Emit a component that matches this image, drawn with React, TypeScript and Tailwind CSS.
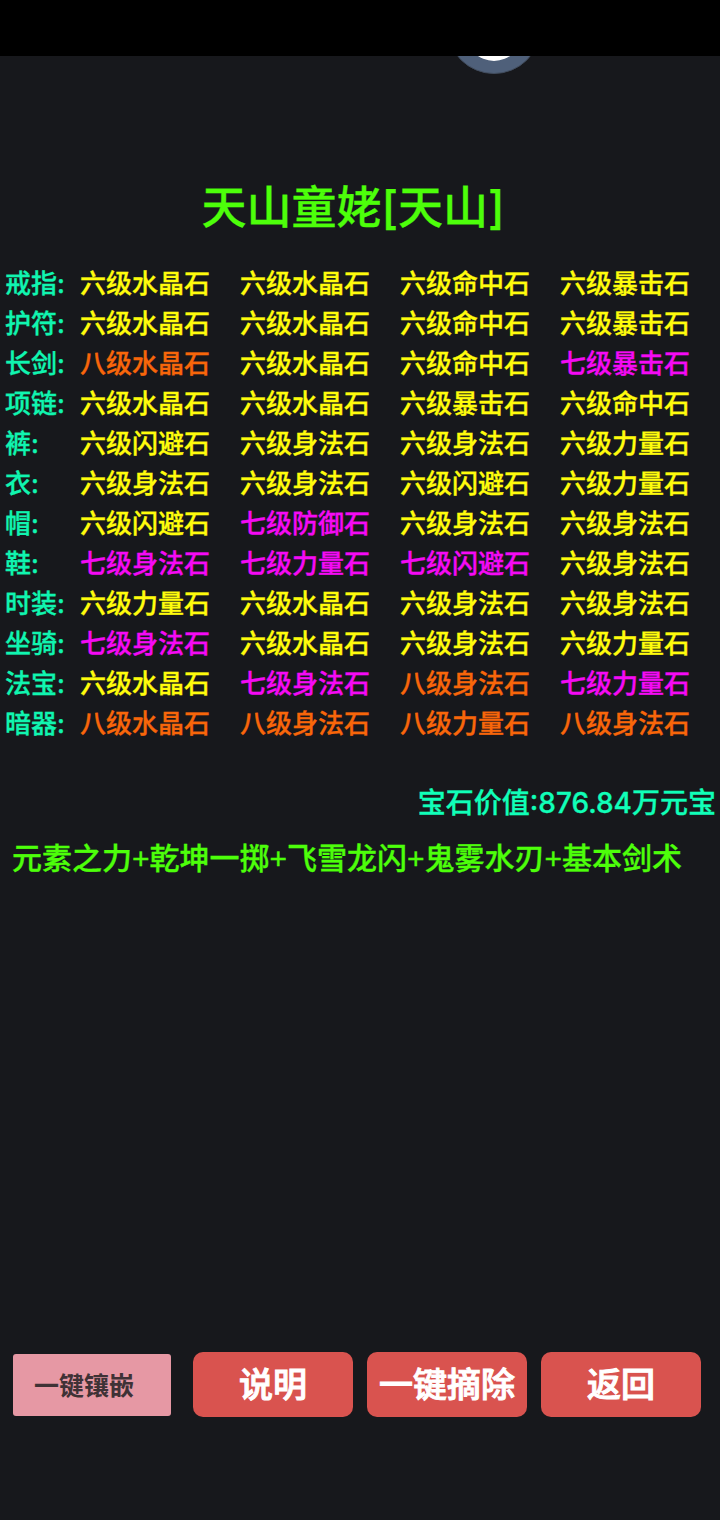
import { clsx } from 'clsx'

type Gem = string

const slots: { name: string; gems: Gem[] }[] = [
  { name: '戒指', gems: ['六级水晶石', '六级水晶石', '六级命中石', '六级暴击石'] },
  { name: '护符', gems: ['六级水晶石', '六级水晶石', '六级命中石', '六级暴击石'] },
  { name: '长剑', gems: ['八级水晶石', '六级水晶石', '六级命中石', '七级暴击石'] },
  { name: '项链', gems: ['六级水晶石', '六级水晶石', '六级暴击石', '六级命中石'] },
  { name: '裤', gems: ['六级闪避石', '六级身法石', '六级身法石', '六级力量石'] },
  { name: '衣', gems: ['六级身法石', '六级身法石', '六级闪避石', '六级力量石'] },
  { name: '帽', gems: ['六级闪避石', '七级防御石', '六级身法石', '六级身法石'] },
  { name: '鞋', gems: ['七级身法石', '七级力量石', '七级闪避石', '六级身法石'] },
  { name: '时装', gems: ['六级力量石', '六级水晶石', '六级身法石', '六级身法石'] },
  { name: '坐骑', gems: ['七级身法石', '六级水晶石', '六级身法石', '六级力量石'] },
  { name: '法宝', gems: ['六级水晶石', '七级身法石', '八级身法石', '七级力量石'] },
  { name: '暗器', gems: ['八级水晶石', '八级身法石', '八级力量石', '八级身法石'] },
]

const skills = ['元素之力', '乾坤一掷', '飞雪龙闪', '鬼雾水刃', '基本剑术']

const actions = ['说明', '一键摘除', '返回']

// gem colour follows its level
function gemColor(gem: Gem) {
  if (gem.startsWith('八')) return 'text-[#f8660a]'
  if (gem.startsWith('七')) return 'text-[#f50af5]'
  return 'text-[#fffc0c]'
}

function FloatingBall() {
  return (
    <svg className="block ml-[63%] w-20 h-5" viewBox="0 0 80 20" aria-hidden="true">
      <circle cx="40" cy="-29" r="46.5" fill="#4f607a" stroke="#414c5d" />
      <circle cx="40" cy="-23" r="28" fill="#fff" />
    </svg>
  )
}

export default function App() {
  return (
    <div className="min-h-screen flex flex-col bg-[#17181c] font-medium font-[Inter,'Noto_Sans_CJK_SC',sans-serif] [-webkit-text-stroke:0.02em]">
      {/* Status bar */}
      <div className="h-14 bg-black" />
      <FloatingBall />

      <main className="flex-1 flex flex-col">
        <h1 className="mt-[104px] pr-[14px] text-center text-[45px] leading-14 font-medium text-[#4dff0a]">
          天山童姥[天山]
        </h1>

        {/* Gem slots */}
        <table className="mt-7 w-full table-fixed text-[26px] leading-10">
          <tbody>
            {slots.map((slot) => (
              <tr key={slot.name}>
                <th scope="row" className="w-20 p-0 pl-[5px] text-left font-medium text-[#10f5b0]">
                  {slot.name}:
                </th>
                {slot.gems.map((gem, i) => (
                  <td key={i} className={clsx('p-0', gemColor(gem))}>
                    {gem}
                  </td>
                ))}
              </tr>
            ))}
          </tbody>
        </table>

        <p className="mt-10 pr-1 text-right text-[28px] leading-[38px] text-[#10ffb8]">
          宝石价值:876.84万元宝
        </p>
        <p className="mt-4 pl-3 text-[30px] leading-[42px] font-['Liberation_Sans','Noto_Sans_CJK_SC',sans-serif] text-[#4dff0a]">
          {skills.join('+')}
        </p>

        {/* Actions */}
        <div className="mt-auto mb-[103px] pl-[13px] pr-[19px] flex items-center gap-[14px]">
          <button className="flex-[79] mr-2 h-[62px] rounded-[3px] bg-[#e698a4] text-[25px] font-bold text-[#3f3236] whitespace-nowrap [-webkit-text-stroke:0]">
            <span className="block mt-1 mr-4">一键镶嵌</span>
          </button>
          {actions.map((label) => (
            <button
              key={label}
              className="flex-[80] h-[65px] rounded-[10px] bg-[#d9534f] text-[34px] text-white whitespace-nowrap [-webkit-text-stroke:0.03em]"
            >
              {label}
            </button>
          ))}
        </div>
      </main>
    </div>
  )
}
